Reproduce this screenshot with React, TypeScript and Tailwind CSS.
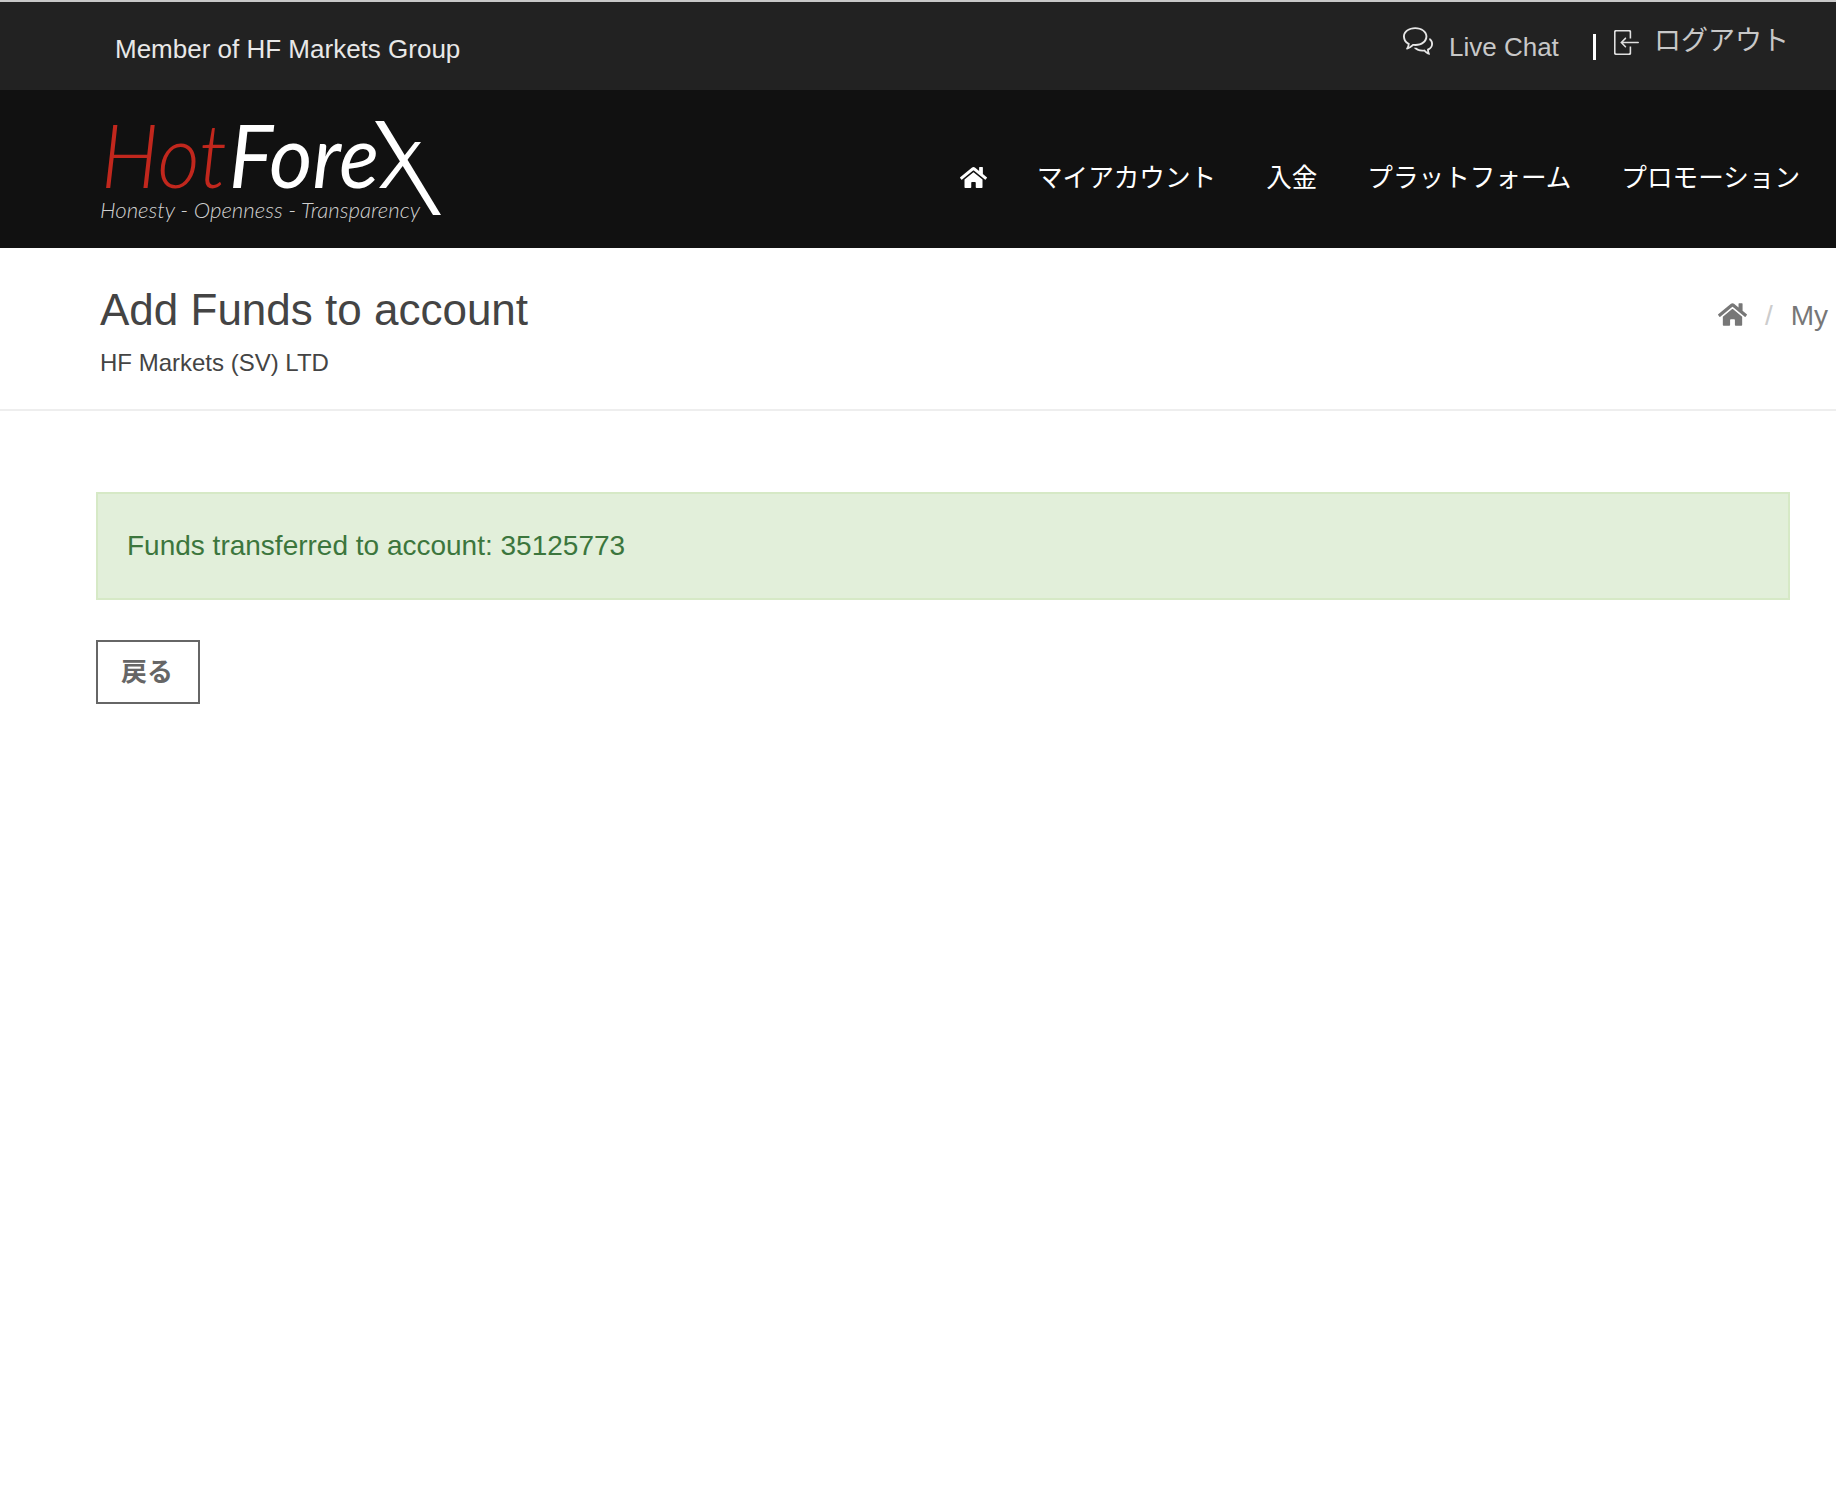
import { FaHome } from "react-icons/fa";
import { SlBubbles, SlLogin } from "react-icons/sl";

const font = { fontFamily: '"Liberation Sans", "Noto Sans CJK JP", sans-serif' };

const navItems = ["マイアカウント", "入金", "プラットフォーム", "プロモーション"];

function Logo() {
  return (
    <svg width="344" height="108" viewBox="0 0 344 108" className="block">
      <g fontFamily="Lato, sans-serif" fontStyle="italic" fontWeight="300">
        <text x="2" y="68" fontSize="88" fill="#c1271d" textLength="126" lengthAdjust="spacingAndGlyphs">
          Hot
        </text>
        <text x="130" y="68" fontSize="88" fill="#ffffff" fontWeight="400" textLength="150" lengthAdjust="spacingAndGlyphs">
          Fore
        </text>
        <text x="1" y="98" fontSize="22" fill="#cfcfcf" textLength="320" lengthAdjust="spacingAndGlyphs">
          Honesty - Openness - Transparency
        </text>
      </g>
      {/* the long X of the wordmark */}
      <path d="M276 1 L334 95 L342 95 L285 1 Z" fill="#ffffff" />
      <path d="M322 22 L316 22 L280 68 L287 68 Z" fill="#ffffff" />
    </svg>
  );
}

export default function App() {
  return (
    <div className="min-h-[1500px] bg-white overflow-hidden" style={font}>
      {/* Top bar */}
      <div className="h-[90px] bg-[#222222] border-t-2 border-[#c8c8c8] flex justify-between pl-[115px] pr-[47px]">
        <p className="text-[26px] leading-[30px] text-[#e8e8e8] pt-[32px]">Member of HF Markets Group</p>
        <div className="flex items-start text-[#c8c8c8] pt-[24px]">
          <SlBubbles size={30} className="text-[#e6e6e6] mr-[16px]" />
          <span className="text-[26px] leading-[30px] pt-[6px] w-[111px]">Live Chat</span>
          <span className="w-[3px] h-[26px] bg-white ml-[33px] mt-[8px]" />
          <SlLogin size={25} className="text-[#e0e0e0] ml-[18px] mt-[4px] -scale-x-100" />
          <span className="text-[27px] leading-[30px] ml-[15px]">ログアウト</span>
        </div>
      </div>

      {/* Main nav */}
      <div className="h-[158px] bg-[#111111] flex justify-between pl-[99px] pr-[36px]">
        <div className="pt-[30px]">
          <Logo />
        </div>
        <nav className="flex items-start gap-[50px] pt-[70px] text-white text-[25.6px] leading-[36px]">
          <FaHome size={27} className="mt-[4px]" />
          {navItems.map((item) => (
            <a key={item} href="#" className="whitespace-nowrap">
              {item}
            </a>
          ))}
        </nav>
      </div>

      {/* Page title */}
      <div className="h-[163px] border-b-2 border-[#eeeeee] flex justify-between pl-[100px]">
        <div>
          <h1 className="text-[44px] leading-[50px] text-[#444444] pt-[37px]">Add Funds to account</h1>
          <p className="text-[24px] leading-[28px] text-[#444444] pt-[14px]">HF Markets (SV) LTD</p>
        </div>
        <div className="flex items-start gap-[18px] pt-[52px] pr-[8px] text-[#777777] text-[28px] leading-[32px]">
          <FaHome size={29} className="text-[#777777]" />
          <span className="text-[#cccccc]">/</span>
          <span>My</span>
        </div>
      </div>

      {/* Content */}
      <div className="pl-[96px] pr-[46px] pt-[81px]">
        <div className="h-[108px] bg-[#e2efda] border-2 border-[#d6e9c6] flex items-center pl-[29px] text-[28px] text-[#3c763d]">
          Funds transferred to account: 35125773
        </div>
        <button
          type="button"
          className="mt-[40px] w-[104px] h-[64px] border-2 border-[#666666] bg-white text-[26px] font-bold text-[#666666] pr-[2px]"
        >
          戻る
        </button>
      </div>
    </div>
  );
}
